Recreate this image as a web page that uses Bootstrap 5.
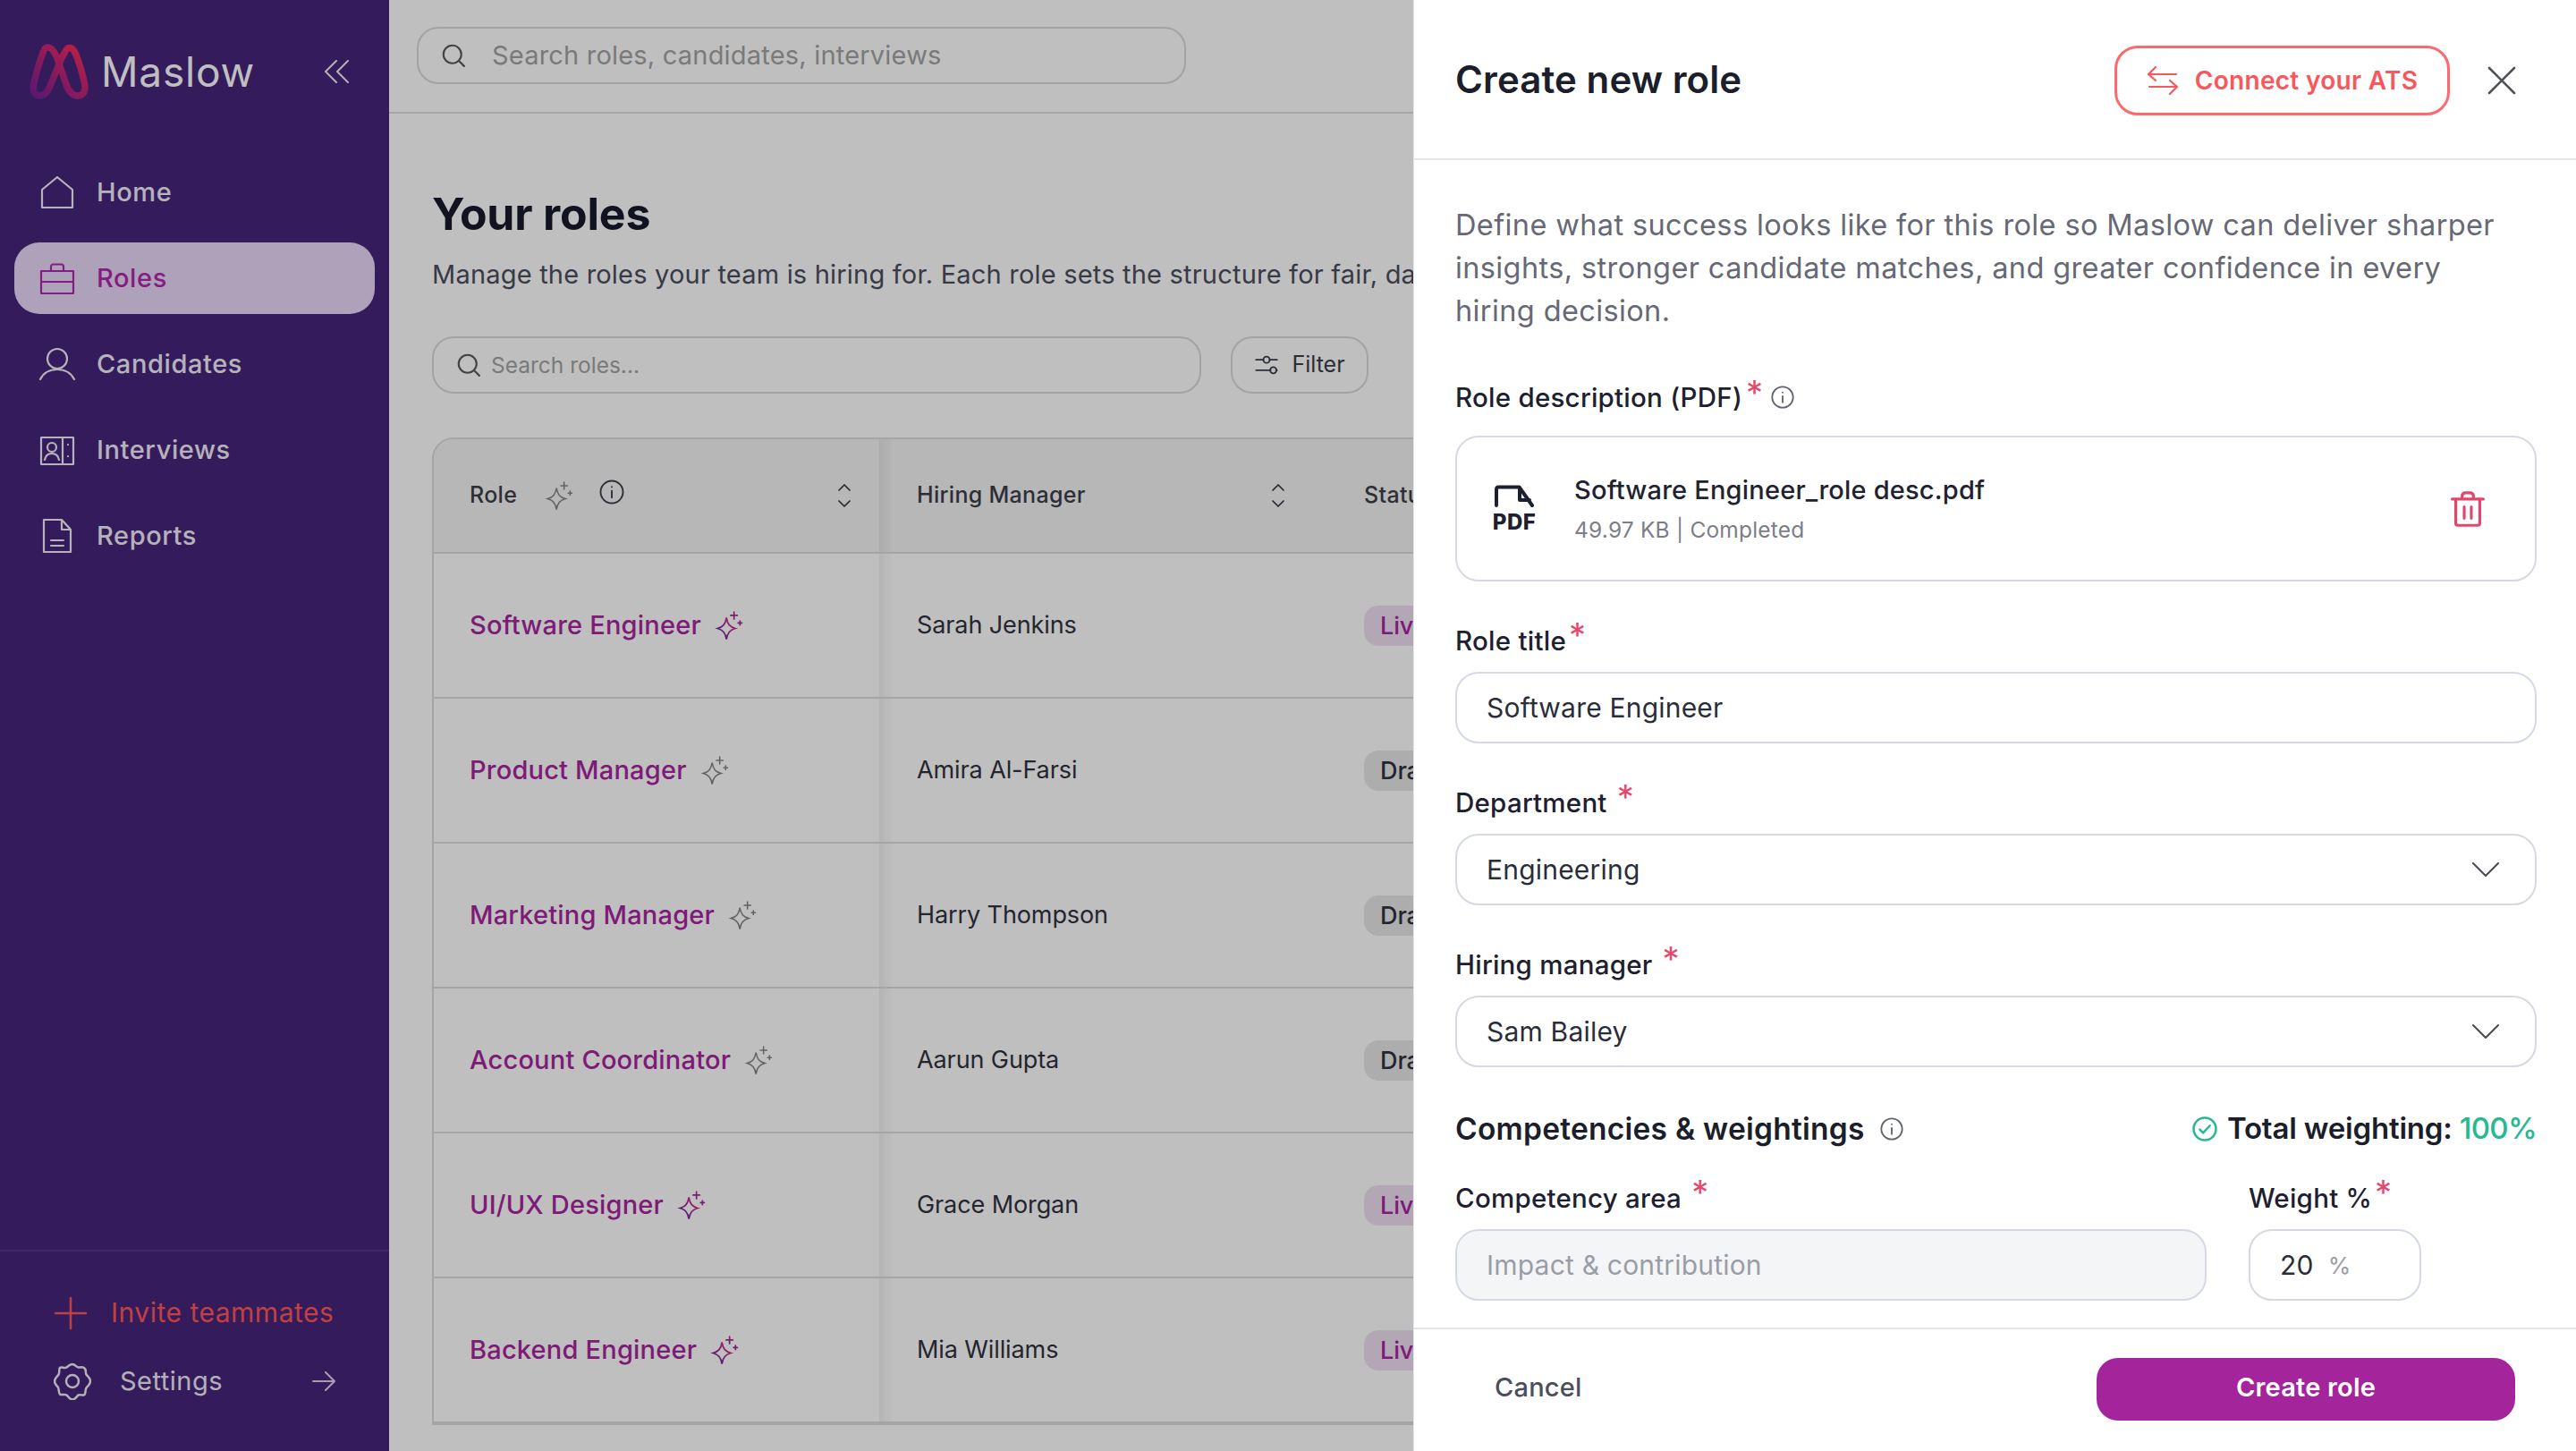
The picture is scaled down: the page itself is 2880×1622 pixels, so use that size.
<!DOCTYPE html>
<html lang="en">
<head>
  <meta charset="UTF-8">
  <title>Maslow - Create new role</title>
  <link href="https://cdn.jsdelivr.net/npm/bootstrap@5.3.0/dist/css/bootstrap.min.css" rel="stylesheet">
  <style>
    html, body { height: 100%; }
    body {
      width: 2880px;
      height: 1622px;
      overflow: hidden;
      font-family: "Inter", "Noto Sans", sans-serif;
      font-size: 28px;
      color: #1f2230;
      background: #fff;
    }

    /* left rail */
    .side-rail { width: 435px; flex: none; background: #44247b; color: #fff; height: 100%; }
    .rail-brand { height: 160px; padding: 0 44px 0 31px; }
    .brand-name { font-size: 46px; font-weight: 400; letter-spacing: .8px; color: #fff; margin-left: 12px; }
    .rail-nav { padding: 15px 16px 0; gap: 16px; }
    .rail-link {
      height: 80px; padding: 0 28px; border-radius: 28px; gap: 24px;
      color: #f3eef8; font-size: 29px; font-weight: 500; letter-spacing: .6px; text-decoration: none;
    }
    .rail-link svg { width: 40px; height: 40px; flex: none; fill: none; stroke: currentColor; stroke-width: 2.2; stroke-linecap: round; stroke-linejoin: round; }
    .rail-link.active { background: #e9d8f8; color: #b327ae; }
    .rail-foot { border-top: 2px solid #52338a; padding: 46px 60px 0 60px; height: 225px; }
    .invite-link { color: #ff5757; font-size: 30px; letter-spacing: .5px; gap: 26px; text-decoration: none; }
    .settings-link { color: #f0ebf4; font-size: 29px; letter-spacing: .5px; margin-top: 32px; text-decoration: none; }
    .settings-link span { margin-left: 32px; }

    /* main column */
    .work-area { min-width: 0; height: 100%; overflow: hidden; background: #fff; }
    .top-strip { height: 127px; border-bottom: 2px solid #dcdcdc; padding: 30px 0 0 31px; }
    .find-box {
      border: 2px solid #dadada; border-radius: 24px; height: 64px; padding: 0 24px; gap: 28px;
      color: #a3a3a3; background: #fff;
    }
    .find-box svg { width: 30px; height: 30px; flex: none; fill: none; stroke: #5a5a5a; stroke-width: 1.7; stroke-linecap: round; }
    .find-top { width: 860px; font-size: 29px; letter-spacing: .2px; }
    .find-roles { width: 860px; font-size: 24.5px; letter-spacing: 0; gap: 10px; }
    .page-pad { padding: 82px 0 0 48px; width: 1700px; }
    .page-title { font-size: 50px; line-height: 60px; font-weight: 700; color: #171b2b; margin: 0; letter-spacing: -.2px; }
    .page-sub { font-size: 29px; line-height: 44px; margin: 16px 0 47px; color: #4b4e5c; white-space: nowrap; letter-spacing: .2px; }
    .filter-chip {
      width: 154px; height: 64px; margin-left: 33px; gap: 14px; border: 2px solid #dadada; border-radius: 24px;
      font-size: 25px; color: #3b3e4a; background: #fff;
    }
    .filter-chip svg { width: 28px; height: 28px; fill: none; stroke: #3b3e4a; stroke-width: 1.6; stroke-linecap: round; }

    .roles-frame { margin-top: 49px; width: 1600px; border: 2px solid #dcdcdc; border-radius: 24px 24px 0 0; overflow: hidden; }
    .roles-grid { table-layout: fixed; width: 1600px; margin: 0; }
    .roles-grid th, .roles-grid td {
      padding: 0 40px; vertical-align: middle; border-bottom: 2px solid #dcdcdc; box-shadow: none; color: #30323e;
    }
    .roles-grid th { height: 127px; background: #f4f4f4; font-size: 25px; font-weight: 500; letter-spacing: .3px; color: #3c3e4a; }
    .roles-grid td { height: 162px; background: #fff; font-size: 27px; letter-spacing: -.1px; }
    .roles-grid .second-col { padding-left: 42px; background-image: linear-gradient(90deg, rgba(0, 0, 0, .055), rgba(0, 0, 0, 0) 16px); }
    .col-role { width: 498px; }
    .col-hire { width: 502px; }
    .ico-spark { width: 34px; height: 34px; flex: none; }
    .head-spark { margin-left: 30px; }
    .ico-info { width: 30px; height: 30px; flex: none; fill: none; stroke: currentColor; stroke-width: 1.5; stroke-linecap: round; }
    .head-info { margin-left: 27px; margin-bottom: 8px; }
    .ico-sort { width: 14px; height: 26px; flex: none; fill: none; stroke: #343642; stroke-width: 1.7; stroke-linecap: round; stroke-linejoin: round; }
    .sort-role { margin-left: auto; margin-right: -8px; }
    .sort-hire { margin-right: 9px; }
    .roles-grid td .role-name { color: #a8249f; font-weight: 500; font-size: 29px; letter-spacing: .2px; text-decoration: none; gap: 14px; }
    .state-pill { display: inline-block; height: 45px; line-height: 45px; padding: 0 18px; border-radius: 16px; font-size: 27px; font-weight: 500; white-space: nowrap; }
    .state-live { background: #f0dff2; color: #a8249f; }
    .state-draft { background: #e7e7e7; color: #30323e; }

    /* create role panel */
    .offcanvas-backdrop.show.panel-veil { opacity: .25; }
    .role-panel.offcanvas { --bs-offcanvas-width: 1300px; border-left: 1px solid #e4e6ec; color: #1f2230; }
    .panel-head { height: 179px; flex: none; padding: 2px 65px 0 46px; border-bottom: 2px solid #e4e6ec; }
    .panel-title { font-size: 42px; font-weight: 600; margin: 0; color: #1b1e2b; letter-spacing: .1px; }
    .ats-btn {
      height: 78px; width: 375px; gap: 18px; border: 3px solid #fb6a6e; border-radius: 26px;
      color: #f8575c; font-size: 28px; font-weight: 600; background: #fff; padding: 0; letter-spacing: .3px;
    }
    .ats-btn svg { width: 36px; height: 36px; fill: none; stroke: #f8575c; stroke-width: 2.2; stroke-linecap: round; stroke-linejoin: round; }
    .x-btn { background: none; border: 0; padding: 0; margin-left: 42px; margin-right: 2px; line-height: 0; }
    .x-btn svg { width: 32px; height: 32px; stroke: #4f5159; stroke-width: 2.6; stroke-linecap: round; fill: none; }
    .panel-body { flex: 1 1 auto; min-height: 0; overflow: hidden; padding: 49px 44px 0 46px; }
    .panel-intro { max-width: 1180px; font-size: 32.5px; line-height: 48px; color: #666975; margin: 0 0 52px; letter-spacing: .38px; }
    .fld-label { font-size: 29.5px; line-height: 40px; font-weight: 500; margin: 0 0 15px; color: #1d2030; letter-spacing: .25px; }
    .fld-top { margin-bottom: 23px; }
    .req { color: #e5486e; font-size: 38px; line-height: 0; vertical-align: 3px; margin-left: 3px; font-weight: 400; }
    .fld-top .req { margin-bottom: 10px; }
    .ico-small { width: 28px; height: 28px; fill: none; stroke: #62656f; stroke-width: 1.6; stroke-linecap: round; margin-left: 8px; }
    .file-box { height: 163px; border: 2px solid #d5d9e3; border-radius: 26px; padding: 0 56px 0 41px; margin-bottom: 46px; }
    .file-kind { width: 46px; flex: none; }
    .file-kind svg { width: 46px; height: 25px; fill: none; stroke: #1d2030; stroke-width: 4; stroke-linejoin: round; stroke-linecap: round; }
    .file-kind span { font-size: 24px; line-height: 22px; font-weight: 800; color: #1d2030; letter-spacing: .5px; margin-top: 6px; }
    .file-text { margin-left: 44px; padding-top: 2px; }
    .file-name { font-size: 29px; font-weight: 500; color: #1f2230; letter-spacing: .2px; line-height: 40px; }
    .file-meta { font-size: 24.5px; color: #7b7e88; letter-spacing: .2px; line-height: 40px; margin-top: 4px; }
    .file-bin { width: 38px; height: 42px; fill: none; stroke: #e2466c; stroke-width: 2; stroke-linecap: round; stroke-linejoin: round; }
    .role-panel .form-control, .role-panel .form-select {
      height: 80px; border: 2px solid #d5d9e3; border-radius: 26px; padding: 0 33px; font-size: 30px; color: #2a2d3a; letter-spacing: .2px;
    }
    .role-panel .form-select {
      background-image: url("data:image/svg+xml,%3csvg xmlns='http://www.w3.org/2000/svg' viewBox='0 0 30 16'%3e%3cpath fill='none' stroke='%23474a55' stroke-width='2' stroke-linecap='round' stroke-linejoin='round' d='M1 1l14 14L29 1'/%3e%3c/svg%3e");
      background-size: 30px 16px; background-position: right 40px center;
    }
    .fld-gap { margin-bottom: 46px; }
    .fld-gap-last { margin-bottom: 45px; }
    .role-panel .comp-input { background: #f4f5f7; }
    .role-panel .comp-input::placeholder { color: #9a9da6; opacity: 1; }
    .sect-row { height: 48px; margin-bottom: 33px; }
    .sect-title { font-size: 33.5px; font-weight: 600; color: #1b1e2b; margin: 0; letter-spacing: .25px; }
    .weight-total { font-size: 33px; font-weight: 600; color: #1b1e2b; letter-spacing: -.2px; }
    .weight-total b { font-weight: 500; color: #26b991; letter-spacing: -.7px; }
    .weight-total svg { width: 30px; height: 30px; margin-right: 10px; fill: none; stroke: #26b991; stroke-width: 2; stroke-linecap: round; stroke-linejoin: round; }
    .weight-col { width: 193px; margin-left: 47px; margin-right: 129px; flex: none; }
    .weight-box { gap: 16px; }
    .weight-box i { font-style: normal; color: #9a9da6; font-size: 26px; }
    .panel-foot { height: 138px; flex: none; padding: 0 68px 3px 90px; border-top: 2px solid #e6e4f0; background: #fff; }
    .cancel-btn { background: none; border: 0; padding: 0 0 3px; font-size: 29px; font-weight: 500; color: #4b4e5c; letter-spacing: .2px; }
    .create-btn { width: 468px; height: 70px; padding: 0 0 3px; border-radius: 24px; border: 0; background: #a4249c; color: #fff; font-size: 29px; font-weight: 600; letter-spacing: .2px; }
  </style>
</head>
<body>
  <svg width="0" height="0" class="position-absolute">
    <defs>
      <linearGradient id="logoGrad" x1="0" y1="1" x2="1" y2="0">
        <stop offset="0" stop-color="#7a1f96"/>
        <stop offset="1" stop-color="#ff2a5c"/>
      </linearGradient>
      <linearGradient id="sparkGrad" x1="0" y1="1" x2="1" y2="0">
        <stop offset="0" stop-color="#4b2a96"/>
        <stop offset=".6" stop-color="#b8239f"/>
        <stop offset="1" stop-color="#f4305a"/>
      </linearGradient>
      <symbol id="spark" viewBox="0 0 24 24">
        <path d="M10 6c.8 5.200 2.800 7.300 7 8.500-4.200 1.200-6.200 3.300-7 8.500-.8-5.200-2.800-7.300-7-8.500 4.200-1.200 6.200-3.300 7-8.500z"/>
        <path d="M16 1.500v5.500M13.400 4.200h5.200M20.700 8.500v3.200M19.200 10.100h3"/>
      </symbol>
      <symbol id="findIco" viewBox="0 0 24 24"><circle cx="11" cy="11" r="8"/><path d="M17 17l4.500 4.500"/></symbol>
      <symbol id="infoIco" viewBox="0 0 24 24"><circle cx="12" cy="12" r="10"/><path d="M12 11v6M12 7.400v.1"/></symbol>
      <symbol id="sortIco" viewBox="0 0 14 26"><path d="M1 7l6-6 6 6M1 19l6 6 6-6"/></symbol>
    </defs>
  </svg>

  <div class="d-flex h-100">
    <aside class="side-rail d-flex flex-column">
      <div class="rail-brand d-flex align-items-center">
        <svg width="70" height="66" viewBox="-2 -2 66 62" fill="none">
          <path stroke="url(#logoGrad)" stroke-width="7" stroke-linejoin="round" d="M19 3.500C23 3.500 26 7 29 15L38 41C41 50 46 54.500 51 54.500C56.500 54.500 59.500 49 58 42C56 32 51 15 47.500 8.500C45 3 40.500 2.500 38 7C35.500 11 33 16 31 21L22 43C19 50.500 15.500 54.500 11 54.500C5.500 54.500 2.500 49 4.500 41C7 30 11.500 15 14.500 8C15.500 5 17 3.500 19 3.500Z"/>
        </svg>
        <span class="brand-name flex-grow-1">Maslow</span>
        <svg width="28" height="26" viewBox="0 0 28 26" fill="none" stroke="#f2eef6" stroke-width="2" stroke-linecap="round" stroke-linejoin="round"><path d="M13 1L1 13l12 12M26 1L14 13l12 12"/></svg>
      </div>

      <nav class="rail-nav d-flex flex-column">
        <a class="rail-link d-flex align-items-center" href="#">
          <svg viewBox="0 0 40 40"><path d="M3 37V17L20 3l17 14v20z"/></svg>Home
        </a>
        <a class="rail-link active d-flex align-items-center" href="#">
          <svg viewBox="0 0 40 40"><path d="M2 12h36v25H2zM2 24h36M13 12V7c0-1.500 1-2.500 2.500-2.500h9C26 4.500 27 5.500 27 7v5"/></svg>Roles
        </a>
        <a class="rail-link d-flex align-items-center" href="#">
          <svg viewBox="0 0 40 40"><circle cx="20" cy="14" r="11"/><path d="M1 37c3.500-7 10-11 19-11s15.500 4 19 11"/></svg>Candidates
        </a>
        <a class="rail-link d-flex align-items-center" href="#">
          <svg viewBox="0 0 40 40"><path d="M2 6h36v30H2zM26 6v30"/><circle cx="14" cy="17" r="5"/><path d="M6 31c1-5 4-7 8-7s7 2 8 7M32 14v.1M32 27v.1"/></svg>Interviews
        </a>
        <a class="rail-link d-flex align-items-center" href="#">
          <svg viewBox="0 0 40 40"><path d="M5 2h20l10 11v25H5zM25 2v11h10M13 25h14M13 31h14"/></svg>Reports
        </a>
      </nav>

      <div class="rail-foot mt-auto">
        <a class="invite-link d-flex align-items-center" href="#">
          <svg width="38" height="38" viewBox="0 0 38 38" fill="none" stroke="#ff5757" stroke-width="2.500" stroke-linecap="round"><path d="M19 2v34M2 19h34"/></svg>Invite teammates
        </a>
        <a class="settings-link d-flex align-items-center" href="#">
          <svg width="42" height="42" viewBox="0 0 42 42" fill="none" stroke="#f0ebf4" stroke-width="2.500" stroke-linejoin="round"><circle cx="21" cy="21" r="7"/><path d="M21 2c3 0 4 3 6.500 3.500S32 4 34.500 6.500 35 11 36.500 13.500 41 17 41 21s-3 5-4.500 7.500-.5 6-2 7.500-6-.5-7 .5-3.500 5-6.500 5-4.500-3.500-6.500-5-6 .5-7.500-1-1-5.500-2-7.500S1 24.500 1 21s3-5 4.500-7.500 0-6 1.500-7.500 5.500 1 7.500-.5S18 2 21 2z"/></svg>
          <span class="flex-grow-1">Settings</span>
          <svg width="26" height="22" viewBox="0 0 26 22" fill="none" stroke="#e4cdea" stroke-width="2" stroke-linecap="round" stroke-linejoin="round"><path d="M1 11h24M15 1l10 10-10 10"/></svg>
        </a>
      </div>
    </aside>

    <main class="work-area flex-grow-1">
      <div class="top-strip">
        <div class="find-box find-top d-flex align-items-center">
          <svg><use href="#findIco"/></svg><span>Search roles, candidates, interviews</span>
        </div>
      </div>

      <div class="page-pad">
        <h1 class="page-title">Your roles</h1>
        <p class="page-sub">Manage the roles your team is hiring for. Each role sets the structure for fair, da</p>

        <div class="d-flex">
          <div class="find-box find-roles d-flex align-items-center">
            <svg><use href="#findIco"/></svg><span>Search roles...</span>
          </div>
          <div class="filter-chip d-flex align-items-center justify-content-center">
            <svg viewBox="0 0 24 24"><path d="M2 7h7M15 7h7M2 17h14M21 17h1"/><circle cx="12" cy="7" r="3"/><circle cx="18.500" cy="17" r="3"/></svg>Filter
          </div>
        </div>

        <div class="roles-frame">
          <table class="table roles-grid">
            <colgroup><col class="col-role"><col class="col-hire"><col></colgroup>
            <thead>
              <tr>
                <th>
                  <div class="d-flex align-items-center">
                    <span>Role</span>
                    <svg class="ico-spark head-spark" fill="none" stroke="#858585" stroke-width="1.100" stroke-linecap="round"><use href="#spark"/></svg>
                    <svg class="ico-info head-info"><use href="#infoIco"/></svg>
                    <svg class="ico-sort sort-role"><use href="#sortIco"/></svg>
                  </div>
                </th>
                <th class="second-col">
                  <div class="d-flex align-items-center justify-content-between">
                    <span>Hiring Manager</span>
                    <svg class="ico-sort sort-hire"><use href="#sortIco"/></svg>
                  </div>
                </th>
                <th>Status</th>
              </tr>
            </thead>
            <tbody>
              <tr>
                <td><a class="role-name d-inline-flex align-items-center" href="#">Software Engineer<svg class="ico-spark" fill="none" stroke="url(#sparkGrad)" stroke-width="1.200" stroke-linecap="round"><use href="#spark"/></svg></a></td>
                <td class="second-col">Sarah Jenkins</td>
                <td><span class="state-pill state-live">Live</span></td>
              </tr>
              <tr>
                <td><a class="role-name d-inline-flex align-items-center" href="#">Product Manager<svg class="ico-spark" fill="none" stroke="#858585" stroke-width="1.100" stroke-linecap="round"><use href="#spark"/></svg></a></td>
                <td class="second-col">Amira Al-Farsi</td>
                <td><span class="state-pill state-draft">Draft</span></td>
              </tr>
              <tr>
                <td><a class="role-name d-inline-flex align-items-center" href="#">Marketing Manager<svg class="ico-spark" fill="none" stroke="#858585" stroke-width="1.100" stroke-linecap="round"><use href="#spark"/></svg></a></td>
                <td class="second-col">Harry Thompson</td>
                <td><span class="state-pill state-draft">Draft</span></td>
              </tr>
              <tr>
                <td><a class="role-name d-inline-flex align-items-center" href="#">Account Coordinator<svg class="ico-spark" fill="none" stroke="#858585" stroke-width="1.100" stroke-linecap="round"><use href="#spark"/></svg></a></td>
                <td class="second-col">Aarun Gupta</td>
                <td><span class="state-pill state-draft">Draft</span></td>
              </tr>
              <tr>
                <td><a class="role-name d-inline-flex align-items-center" href="#">UI/UX Designer<svg class="ico-spark" fill="none" stroke="url(#sparkGrad)" stroke-width="1.200" stroke-linecap="round"><use href="#spark"/></svg></a></td>
                <td class="second-col">Grace Morgan</td>
                <td><span class="state-pill state-live">Live</span></td>
              </tr>
              <tr>
                <td><a class="role-name d-inline-flex align-items-center" href="#">Backend Engineer<svg class="ico-spark" fill="none" stroke="url(#sparkGrad)" stroke-width="1.200" stroke-linecap="round"><use href="#spark"/></svg></a></td>
                <td class="second-col">Mia Williams</td>
                <td><span class="state-pill state-live">Live</span></td>
              </tr>
            </tbody>
          </table>
        </div>
      </div>
    </main>
  </div>

  <div class="offcanvas-backdrop show panel-veil"></div>

  <div class="offcanvas offcanvas-end show role-panel d-flex flex-column" data-bs-backdrop="false" data-bs-scroll="true">
    <div class="panel-head d-flex align-items-center">
      <h2 class="panel-title flex-grow-1">Create new role</h2>
      <button class="ats-btn d-flex align-items-center justify-content-center" type="button">
        <svg viewBox="0 0 36 36"><path d="M3 11h30M10 3l-8 8 8 7M3 25h30M26 18l8 7-8 8" /></svg>Connect your ATS
      </button>
      <button class="x-btn" type="button" aria-label="Close">
        <svg viewBox="0 0 32 32"><path d="M2 2l28 28M30 2L2 30"/></svg>
      </button>
    </div>

    <div class="panel-body">
      <p class="panel-intro">Define what success looks like for this role so Maslow can deliver sharper insights, stronger candidate matches, and greater confidence in every hiring decision.</p>

      <label class="fld-label fld-top d-flex align-items-center">Role description (PDF)<span class="req ms-1">*</span><svg class="ico-small"><use href="#infoIco"/></svg></label>
      <div class="file-box d-flex align-items-center">
        <div class="file-kind d-flex flex-column align-items-center">
          <svg viewBox="0 0 46 25"><path d="M3 23V5c0-1.500 1-2.500 2.500-2.500h23L43 23M29 4v13h11"/></svg>
          <span>PDF</span>
        </div>
        <div class="file-text flex-grow-1">
          <div class="file-name">Software Engineer_role desc.pdf</div>
          <div class="file-meta">49.97 KB | Completed</div>
        </div>
        <svg class="file-bin" viewBox="0 0 24 26"><path d="M1 6h22M8 6V4c0-1.500 1-2.500 2.500-2.500h3C15 1.500 16 2.500 16 4v2M3.500 6v17c0 1 .6 1.500 1.500 1.500h14c.9 0 1.500-.5 1.500-1.500V6M9.500 11.500v8M14.500 11.500v8"/></svg>
      </div>

      <label class="fld-label">Role title<span class="req">*</span></label>
      <div class="fld-gap"><input class="form-control" type="text" value="Software Engineer"></div>

      <label class="fld-label">Department <span class="req">*</span></label>
      <div class="fld-gap">
        <select class="form-select"><option>Engineering</option></select>
      </div>

      <label class="fld-label">Hiring manager <span class="req">*</span></label>
      <div class="fld-gap-last">
        <select class="form-select"><option>Sam Bailey</option></select>
      </div>

      <div class="sect-row d-flex align-items-center justify-content-between">
        <div class="d-flex align-items-center">
          <h3 class="sect-title">Competencies &amp; weightings</h3>
          <svg class="ico-small ms-3"><use href="#infoIco"/></svg>
        </div>
        <div class="weight-total d-flex align-items-center">
          <svg viewBox="0 0 24 24"><circle cx="12" cy="12" r="10"/><path d="M7.500 12.500l3 3 6-6.500"/></svg>
          <span>Total weighting: <b>100%</b></span>
        </div>
      </div>

      <div class="d-flex">
        <div class="flex-grow-1">
          <label class="fld-label">Competency area <span class="req">*</span></label>
          <input class="form-control comp-input" type="text" placeholder="Impact &amp; contribution">
        </div>
        <div class="weight-col">
          <label class="fld-label">Weight %<span class="req">*</span></label>
          <div class="form-control weight-box d-flex align-items-center"><span>20</span><i>%</i></div>
        </div>
      </div>
    </div>

    <div class="panel-foot d-flex align-items-center justify-content-between">
      <button class="cancel-btn" type="button">Cancel</button>
      <button class="create-btn" type="button">Create role</button>
    </div>
  </div>

  <script src="https://cdn.jsdelivr.net/npm/bootstrap@5.3.0/dist/js/bootstrap.bundle.min.js"></script>
</body>
</html>
